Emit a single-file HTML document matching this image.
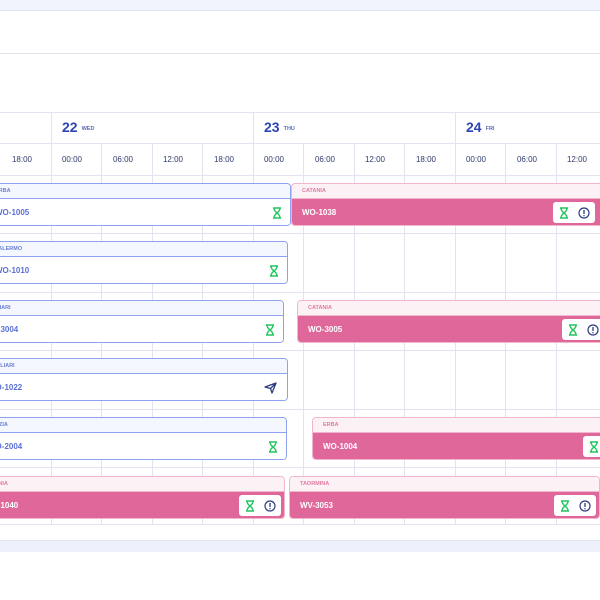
<!DOCTYPE html>
<html><head><style>
*{margin:0;padding:0;box-sizing:border-box}
body{width:600px;height:600px;overflow:hidden;background:#fff;font-family:"Liberation Sans",sans-serif;position:relative}
.abs{position:absolute}
.vl{position:absolute;width:1px;background:#e1e4ef}
.hl{position:absolute;height:1px;background:#e1e4ef;left:0;width:600px}
.t{position:absolute;top:155px;font-size:8px;color:#2f3a6b;width:50px;text-align:center}
.day{position:absolute;top:119px;color:#2d44b5;font-weight:bold;font-size:14px}
.day small{font-size:5.5px;color:#5a6ab8;margin-left:4px;vertical-align:2px}
.ev{position:absolute;height:43px;border-radius:4px;overflow:hidden}
.ev .h{height:15px;font-size:5.5px;font-weight:bold;padding:4px 0 0 10px;text-transform:uppercase}
.ev .b{height:28px;font-size:8px;font-weight:bold;padding:9px 0 0 10px;position:relative}
.blue{border:1px solid #8ea2ee}
.blue .h{background:#f4f7fe;color:#6b7fd8;border-bottom:1px solid #8ea2ee}
.blue .b{background:#fff;color:#5a6fd6}
.pink{border:1px solid #f1b6cd}
.pink .h{background:#fcf2f6;color:#e07aa3;border-bottom:1px solid #f1b6cd}
.pink .b{background:#e0679a;color:#fff}
.ib{position:absolute;right:3px;top:3px;height:21px;background:#fff;border-radius:3px;display:flex;align-items:center;gap:9px;padding:0 5px 0 6px}
.ic{position:absolute;right:8px;top:8px}
</style></head><body>
<div class="abs" style="left:0;top:0;width:600px;height:10px;background:#f1f4fd"></div>
<div class="hl" style="top:10px;background:#e3e6f0"></div>
<div class="hl" style="top:53px"></div>
<div class="hl" style="top:112px"></div>
<div class="hl" style="top:143px"></div>
<div class="hl" style="top:175px"></div>
<div class="hl" style="top:233px"></div>
<div class="hl" style="top:292px"></div>
<div class="hl" style="top:350px"></div>
<div class="hl" style="top:409px"></div>
<div class="hl" style="top:467px"></div>
<div class="hl" style="top:524px"></div>
<div class="abs" style="left:0;top:540px;width:600px;height:12px;background:#eef1fb;border-top:1px solid #e3e6f0"></div>
<div class="vl" style="left:51px;top:112px;height:412px"></div>
<div class="vl" style="left:253px;top:112px;height:412px"></div>
<div class="vl" style="left:455px;top:112px;height:412px"></div>
<div class="vl" style="left:101px;top:143px;height:381px"></div>
<div class="vl" style="left:152px;top:143px;height:381px"></div>
<div class="vl" style="left:202px;top:143px;height:381px"></div>
<div class="vl" style="left:303px;top:143px;height:381px"></div>
<div class="vl" style="left:354px;top:143px;height:381px"></div>
<div class="vl" style="left:404px;top:143px;height:381px"></div>
<div class="vl" style="left:505px;top:143px;height:381px"></div>
<div class="vl" style="left:556px;top:143px;height:381px"></div>
<div class="day" style="left:62px">22<small>WED</small></div>
<div class="day" style="left:264px">23<small>THU</small></div>
<div class="day" style="left:466px">24<small>FRI</small></div>
<div class="t" style="left:-3px">18:00</div>
<div class="t" style="left:47px">00:00</div>
<div class="t" style="left:98px">06:00</div>
<div class="t" style="left:148px">12:00</div>
<div class="t" style="left:199px">18:00</div>
<div class="t" style="left:249px">00:00</div>
<div class="t" style="left:300px">06:00</div>
<div class="t" style="left:350px">12:00</div>
<div class="t" style="left:401px">18:00</div>
<div class="t" style="left:451px">00:00</div>
<div class="t" style="left:502px">06:00</div>
<div class="t" style="left:552px">12:00</div>

<svg width="0" height="0" style="position:absolute"><defs>
<symbol id="hg" viewBox="0 0 10 12"><path d="M1 1h8M1 11h8M2 1c0 3 2 4 3 5c1-1 3-2 3-5M2 11c0-3 2-4 3-5c1 1 3 2 3 5" fill="none" stroke="#22c55e" stroke-width="1.4"/></symbol>
<symbol id="inf" viewBox="0 0 12 12"><circle cx="6" cy="6" r="5" fill="none" stroke="#2e3a80" stroke-width="1.2"/><path d="M6 3v4" stroke="#2e3a80" stroke-width="1.3"/><circle cx="6" cy="8.7" r=".7" fill="#2e3a80"/></symbol>
</defs></svg>

<div class="ev blue" style="left:-16px;top:183px;width:307px"><div class="h">ERBA</div><div class="b">WO-1005<svg class="ic" width="10" height="12"><use href="#hg"/></svg></div></div>
<div class="ev pink" style="left:291px;top:183px;width:315px"><div class="h">CATANIA</div><div class="b">WO-1038<div class="ib" style="right:10px"><svg width="10" height="12"><use href="#hg"/></svg><svg width="12" height="12"><use href="#inf"/></svg></div></div></div>
<div class="ev blue" style="left:-16px;top:241px;width:304px"><div class="h">PALERMO</div><div class="b">WO-1010<svg class="ic" width="10" height="12"><use href="#hg"/></svg></div></div>
<div class="ev blue" style="left:-27px;top:300px;width:311px"><div class="h">CAGLIARI</div><div class="b">WO-3004<svg class="ic" width="10" height="12"><use href="#hg"/></svg></div></div>
<div class="ev pink" style="left:297px;top:300px;width:312px"><div class="h">CATANIA</div><div class="b">WO-3005<div class="ib" style="right:4px"><svg width="10" height="12"><use href="#hg"/></svg><svg width="12" height="12"><use href="#inf"/></svg></div></div></div>
<div class="ev blue" style="left:-23px;top:358px;width:311px"><div class="h">CAGLIARI</div><div class="b">WO-1022<svg class="ic" width="13" height="12" viewBox="0 0 13 12" style="right:10px"><path d="M1 5L12 1L8 11L6.5 6.5Z M6.5 6.5L12 1" fill="none" stroke="#2e3a80" stroke-width="1.3" stroke-linejoin="round"/></svg></div></div>
<div class="ev blue" style="left:-23px;top:417px;width:310px"><div class="h">SPEZIA</div><div class="b">WO-2004<svg class="ic" width="10" height="12"><use href="#hg"/></svg></div></div>
<div class="ev pink" style="left:312px;top:417px;width:320px"><div class="h">ERBA</div><div class="b">WO-1004<div class="ib" style="right:6px"><svg width="10" height="12"><use href="#hg"/></svg><svg width="12" height="12"><use href="#inf"/></svg></div></div></div>
<div class="ev pink" style="left:-27px;top:476px;width:312px"><div class="h">CATANIA</div><div class="b">WO-1040<div class="ib"><svg width="10" height="12"><use href="#hg"/></svg><svg width="12" height="12"><use href="#inf"/></svg></div></div></div>
<div class="ev pink" style="left:289px;top:476px;width:311px"><div class="h">TAORMINA</div><div class="b">WV-3053<div class="ib"><svg width="10" height="12"><use href="#hg"/></svg><svg width="12" height="12"><use href="#inf"/></svg></div></div></div>
</body></html>
